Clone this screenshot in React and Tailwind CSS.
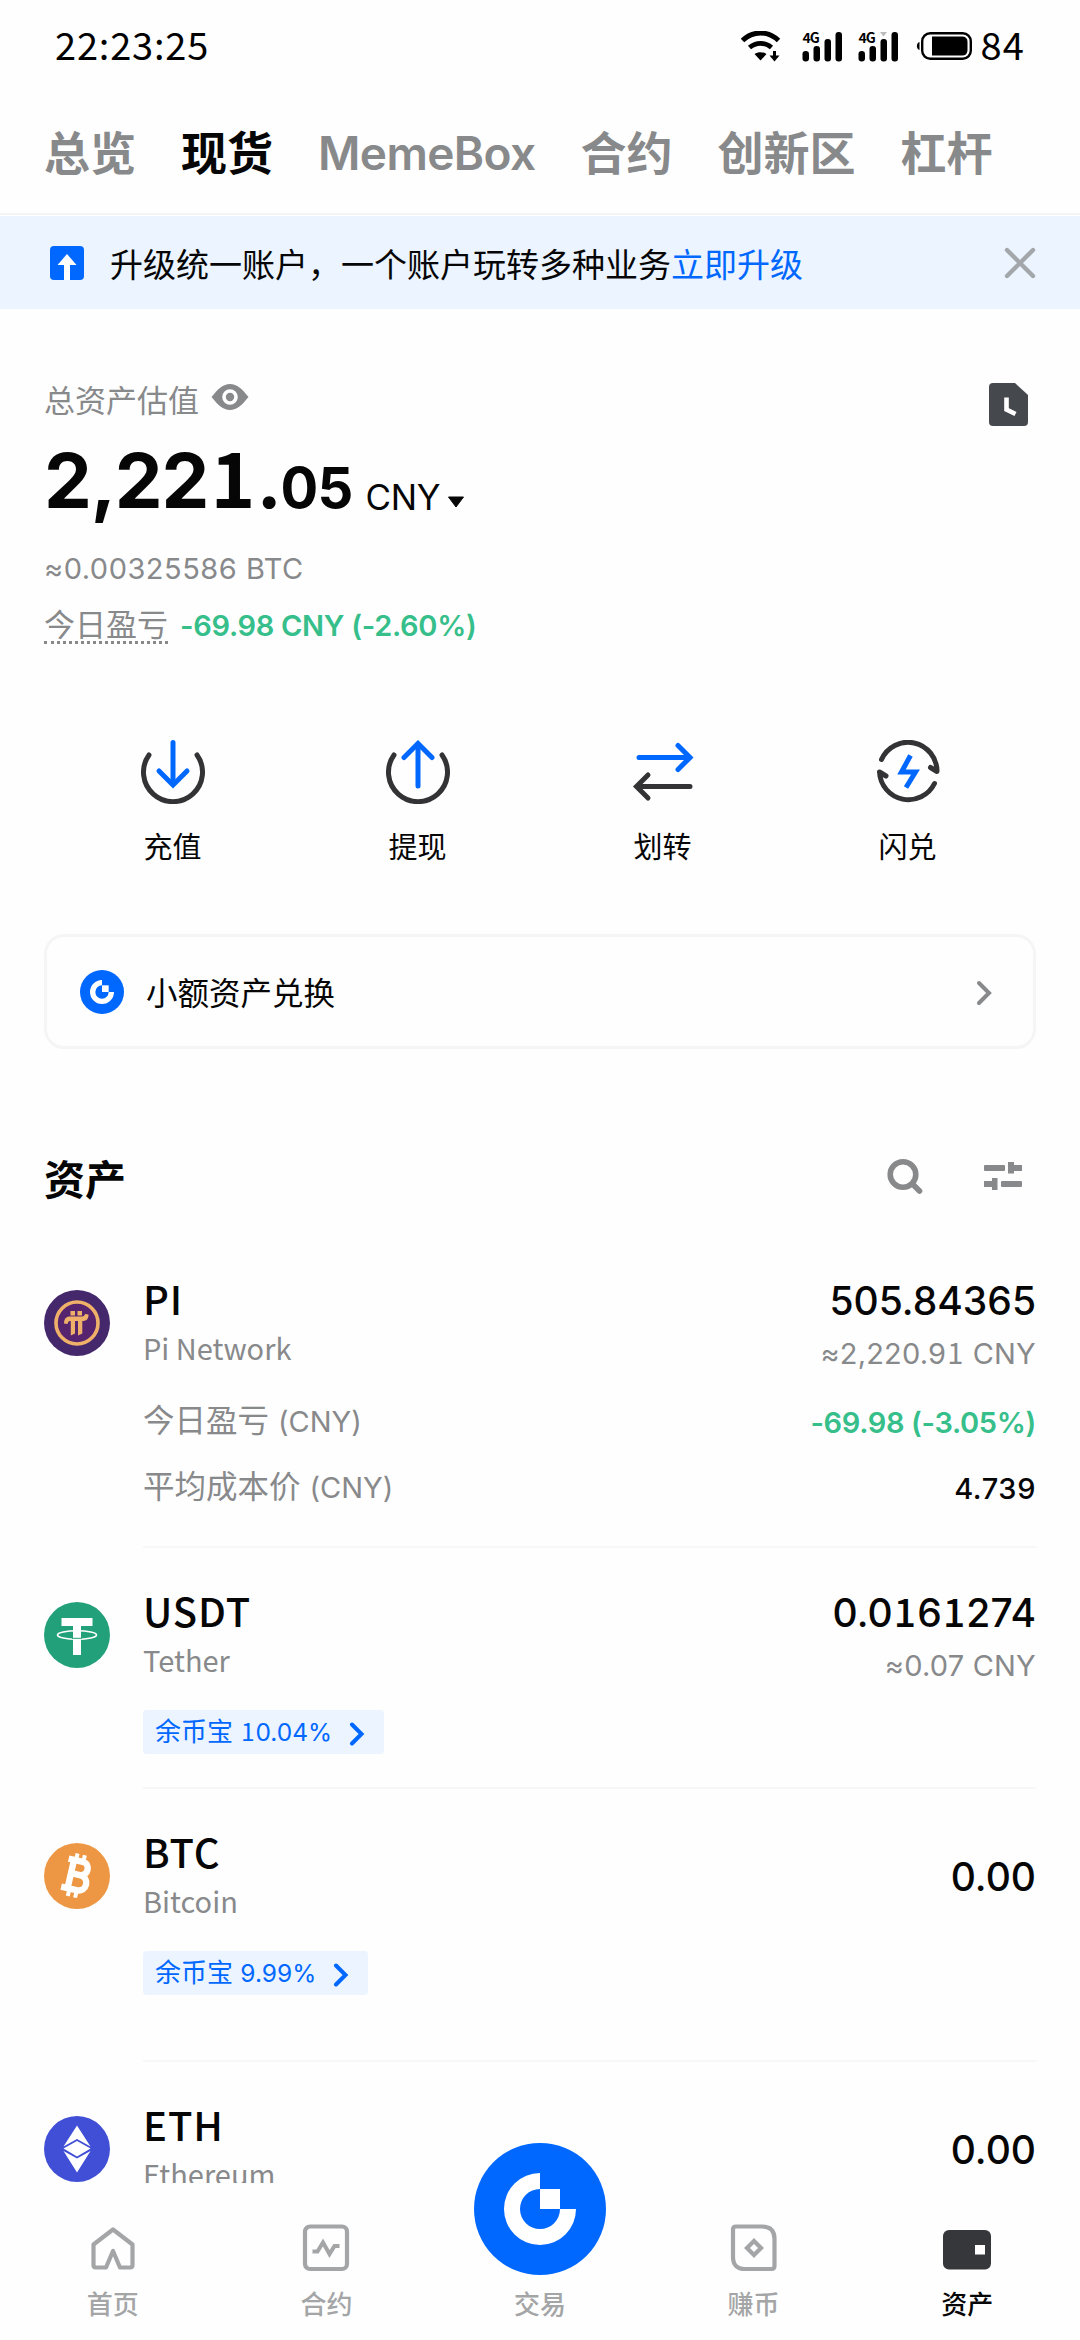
import React, { useState } from 'react';

const tabs = [
  { id: 'overview', name: '总览' },
  { id: 'spot', name: '现货' },
  { id: 'memebox', name: 'MemeBox' },
  { id: 'futures', name: '合约' },
  { id: 'innovation', name: '创新区' },
  { id: 'margin', name: '杠杆' }
];

const Num = ({ children }) =>
  String(children).split(/(1)/).map((part, i) =>
    part === '1' ? (
      <span key={i} className="font-['Noto_Sans_CJK_SC',sans-serif] leading-[0] mx-[0.03em]">1</span>
    ) : (
      part
    )
  );

const WifiIcon = () => (
  <svg className="w-[40px] h-[31px]" viewBox="0 0 40 31" fill="none">
    <path d="M1.500 9.500C12 -0.500 27 -0.500 37.500 9.500" stroke="#000" strokeWidth="5" />
    <path d="M8.500 16.500C15 11 24 11 30.500 16.500" stroke="#000" strokeWidth="4.800" />
    <path d="M13.500 23C17 20.500 22 20.500 25.500 23L19.500 29.500Z" fill="#000" />
    <path d="M33.500 20V26" stroke="#000" strokeWidth="3" />
    <path d="M28.500 24.500H38.500L33.500 30.500Z" fill="#000" />
  </svg>
);

const SignalIcon = ({ marker }) => (
  <div className="relative w-[41px] h-[31px]">
    <span className="absolute left-[1px] top-[-1px] text-[14px] leading-none font-bold tracking-[-1px]">4G</span>
    <svg className="w-[41px] h-[31px]" viewBox="0 0 41 31">
      <g fill="#000">
        <rect x="0.500" y="20" width="6.500" height="10.500" rx="3.200" />
        <rect x="11.500" y="15" width="6.500" height="15.500" rx="3" />
        <rect x="22.500" y="8" width="6.500" height="22.500" rx="3" />
        <rect x="33.500" y="1" width="6.500" height="29.500" rx="3" />
      </g>
      {marker && <path d="M22 1H29L25.500 5.500Z" fill="#bbb" />}
    </svg>
  </div>
);

const BatteryIcon = () => (
  <svg className="w-[56px] h-[28px]" viewBox="0 0 56 28">
    <path d="M3.500 10V18C0 17 0 11 3.500 10Z" fill="#000" />
    <rect x="6.200" y="1.200" width="48.600" height="25.600" rx="8" fill="none" stroke="#000" strokeWidth="2.400" />
    <path d="M16 4.500H46Q51.500 4.500 51.500 10V18Q51.500 23.500 46 23.500H16Z" fill="#000" />
  </svg>
);

const GateMark = ({ className }) => (
  <svg className={className} viewBox="0 0 132 132">
    <circle cx="66" cy="66" r="66" fill="#0068ff" />
    <path d="M66 30A36 36 0 1 0 102 66H86A20 20 0 1 1 66 46Z" fill="#fff" />
    <rect x="66" y="46" width="20" height="20" fill="#fff" />
  </svg>
);

const DepositIcon = () => (
  <svg className="w-[64px] h-[64px]" viewBox="0 0 64 64" fill="none" strokeLinecap="round">
    <path d="M8 15A29.500 29.500 0 1 0 56 15" stroke="#333336" strokeWidth="5" />
    <g stroke="#0068ff" strokeWidth="5">
      <path d="M32 2.500V44" />
      <path d="M18 31L32 45L46 31" />
    </g>
  </svg>
);

const WithdrawIcon = () => (
  <svg className="w-[64px] h-[64px]" viewBox="0 0 64 64" fill="none" strokeLinecap="round">
    <path d="M8 15A29.500 29.500 0 1 0 56 15" stroke="#333336" strokeWidth="5" />
    <g stroke="#0068ff" strokeWidth="5">
      <path d="M32 46V4" />
      <path d="M18 17.500L32 3.500L46 17.500" />
    </g>
  </svg>
);

const TransferIcon = () => (
  <svg className="w-[64px] h-[64px]" viewBox="0 0 64 64" fill="none" strokeWidth="5" strokeLinecap="round">
    <path d="M8 17.500H59M47 5.500L59 17.500L47 29.500" stroke="#0068ff" />
    <path d="M59 46.500H6M17 35L5.500 46.500L17 58" stroke="#333336" />
  </svg>
);

const FlashIcon = () => (
  <svg className="w-[64px] h-[64px]" viewBox="0 0 64 64" fill="none">
    <g stroke="#333336" strokeWidth="5" strokeLinecap="round" strokeLinejoin="round">
      <path d="M5.500 19.500A29 29 0 0 1 61 31.500L54.500 27.500" />
      <path d="M58.500 43.500A29 29 0 0 1 3.500 32L10 36" />
    </g>
    <path d="M34.500 15.500L25.500 32H39.500L30 47.500" stroke="#0068ff" strokeWidth="5" />
  </svg>
);

const actions = [
  { name: '充值', icon: DepositIcon },
  { name: '提现', icon: WithdrawIcon },
  { name: '划转', icon: TransferIcon },
  { name: '闪兑', icon: FlashIcon }
];

const PiLogo = () => (
  <svg className="w-[66px] h-[66px]" viewBox="0 0 66 66">
    <circle cx="33" cy="33" r="33" fill="#45286b" />
    <circle cx="33" cy="33" r="21" fill="#56246f" stroke="#efb169" strokeWidth="3.600" />
    <g fill="#efb169">
      <rect x="26.500" y="21" width="4.500" height="4.500" />
      <rect x="33.500" y="21" width="4.500" height="4.500" />
      <path d="M20 33.500C20 29 22 26.500 26 26.500H38C40 26.500 40.500 25.500 41 24L44.500 24.500C44.500 29 42.500 31 38.500 31H26C24.500 31 24 32 23.500 34Z" />
      <path d="M26.800 30H31V43.500L26.800 45.500Z" />
      <path d="M34 30H38.300V43.500L34 45.500Z" />
    </g>
  </svg>
);

const TetherLogo = () => (
  <svg className="w-[66px] h-[66px]" viewBox="0 0 66 66">
    <circle cx="33" cy="33" r="33" fill="#22a079" />
    <path d="M17.500 16H48.500V24H37V53H29V24H17.500Z" fill="#fff" />
    <ellipse cx="33" cy="33" rx="19.500" ry="4.200" fill="none" stroke="#fff" strokeWidth="1.600" />
    <path d="M28 36.300H38" stroke="#22a079" strokeWidth="1" />
  </svg>
);

const BitcoinLogo = () => (
  <svg className="w-[66px] h-[66px]" viewBox="0 0 66 66">
    <circle cx="33" cy="33" r="33" fill="#ed9744" />
    <g transform="rotate(13 33 33)" fill="none" stroke="#fff">
      <path d="M21 18H35.500C44 18 44 31.500 35.500 31.500H28M35.500 31.500C46.500 31.500 46.500 47 35.500 47H20M26.500 18V47" strokeWidth="6.400" />
      <path d="M28.500 11V18M36 11V18M28.500 47V54.500M36 47V54.500" strokeWidth="4" />
    </g>
  </svg>
);

const EthereumLogo = () => (
  <svg className="w-[66px] h-[66px]" viewBox="0 0 66 66">
    <circle cx="33" cy="33" r="33" fill="#404fd6" />
    <g fill="#fff">
      <path d="M33 9.500L46.500 30.500L33 23L19.500 30.500Z" />
      <path d="M33 25L46.500 32.500L33 40.500L19.500 32.500Z" />
      <path d="M19.500 35L33 42.500L46.500 35L33 56.500Z" />
    </g>
  </svg>
);

const assets = [
  {
    symbol: 'PI',
    name: 'Pi Network',
    logo: PiLogo,
    amount: '505.84365',
    value: '≈2,220.91 CNY',
    pnl: '-69.98 (-3.05%)',
    cost: '4.739',
    spacing: 'pb-[42px]'
  },
  { symbol: 'USDT', name: 'Tether', logo: TetherLogo, amount: '0.0161274', value: '≈0.07 CNY', earn: '10.04%', spacing: 'pb-[33px]' },
  { symbol: 'BTC', name: 'Bitcoin', logo: BitcoinLogo, amount: '0.00', earn: '9.99%', spacing: 'pb-[65px]' },
  { symbol: 'ETH', name: 'Ethereum', logo: EthereumLogo, amount: '0.00', spacing: 'pb-[60px]' }
];

const AssetRow = ({ asset }) => {
  const Logo = asset.logo;
  return (
    <div className="flex pt-[42px]">
      <div className="w-[99px] h-[90px] flex items-center shrink-0">
        <Logo />
      </div>
      <div className={`flex-1 ${asset.spacing} border-b-2 border-[#f7f7f8]`}>
        <div className="h-[90px] flex justify-between items-center">
          <div className="self-start flex flex-col gap-[15px] font-['Noto_Sans_CJK_SC',sans-serif]">
            <span className="text-[40px] leading-none font-medium tracking-[0.9px]">{asset.symbol}</span>
            <span className="text-[29px] leading-none text-[#88898b]">{asset.name}</span>
          </div>
          <div className={`flex flex-col items-end gap-[19px] ${asset.value ? 'pt-[3px]' : ''}`}>
            <span className="text-[39px] leading-none font-medium"><Num>{asset.amount}</Num></span>
            {asset.value && (
              <span className="text-[29px] leading-none text-[#88898b] tracking-[0.2px]"><Num>{asset.value}</Num></span>
            )}
          </div>
        </div>
        {asset.pnl && (
          <div className="mt-[38px] flex flex-col gap-[34px] leading-none">
            <div className="h-[32px] flex justify-between items-center">
              <span className="text-[31.500px] pb-[3px] text-[#88898b]">今日盈亏 <span className="text-[29px]">(CNY)</span></span>
              <span className="text-[29px] font-semibold tracking-[-0.35px] text-[#36be8b]">{asset.pnl}</span>
            </div>
            <div className="h-[32px] flex justify-between items-center">
              <span className="text-[31.500px] pb-[3px] text-[#88898b]">平均成本价 <span className="text-[29px]">(CNY)</span></span>
              <span className="text-[29px] font-medium tracking-[0.6px]">{asset.cost}</span>
            </div>
          </div>
        )}
        {asset.earn && (
          <button className="mt-[30px] h-[44px] px-[12px] flex items-center rounded-[4px] bg-[#ebf4ff] text-[#0068ff] leading-none">
            <span className="text-[26px]">余币宝 <span className="text-[24.500px]"><Num>{asset.earn}</Num></span></span>
            <svg className="ml-[17px] mr-[7px] mt-[3px] w-[16px] h-[24px]" viewBox="0 0 16 24" fill="none">
              <path d="M3 2.500L12.500 12L3 21.500" stroke="#0068ff" strokeWidth="4" strokeLinecap="round" />
            </svg>
          </button>
        )}
      </div>
    </div>
  );
};

const HomeIcon = () => (
  <svg className="w-[48px] h-[48px]" viewBox="0 0 48 48" fill="none" stroke="#a4a5a6" strokeWidth="4.200" strokeLinejoin="round">
    <path d="M24 5.500L43.500 20.500V41Q43.500 43.500 41 43.500H31L24 27L17 43.500H7Q4.500 43.500 4.500 41V20.500Z" />
  </svg>
);

const ContractIcon = () => (
  <svg className="w-[48px] h-[48px]" viewBox="0 0 48 48" fill="none" stroke="#a4a5a6" strokeWidth="4.200">
    <rect x="3" y="2.500" width="42" height="42.500" rx="5" />
    <path d="M10.500 27.500H15.500L21 18.500L27.500 30L32.500 22H37.500" strokeWidth="4" />
  </svg>
);

const EarnIcon = () => (
  <svg className="w-[48px] h-[48px]" viewBox="0 0 48 48" fill="none" stroke="#a4a5a6" strokeWidth="4.200">
    <path d="M6 2.500H32Q44.500 2.500 44.500 15V42Q44.500 45 41.500 45H15Q3 45 3 33V5.500Q3 2.500 6 2.500Z" />
    <path d="M24 17L31 24L24 31L17 24Z" />
  </svg>
);

const WalletIcon = () => (
  <svg className="w-[48px] h-[48px]" viewBox="0 0 48 48">
    <rect x="0" y="6" width="48" height="39.500" rx="6" fill="#35373b" />
    <rect x="32" y="21" width="10" height="9.500" fill="#fff" />
  </svg>
);

const navItems = [
  { id: 'home', name: '首页', icon: HomeIcon },
  { id: 'contract', name: '合约', icon: ContractIcon },
  { id: 'trade', name: '交易' },
  { id: 'earn', name: '赚币', icon: EarnIcon },
  { id: 'assets', name: '资产', icon: WalletIcon }
];

const App = () => {
  const [activeTab, setActiveTab] = useState('spot');
  const [activeNav, setActiveNav] = useState('assets');
  const [showBanner, setShowBanner] = useState(true);

  return (
    <div className="w-[1080px] h-[2340px] bg-[#fefefe] text-[#060607] overflow-hidden flex flex-col font-['Inter','Noto_Sans_CJK_SC',sans-serif]">
      <div className="h-[2183px] overflow-hidden shrink-0">
        {/* Status bar */}
        <div className="h-[92px] pl-[55px] pr-[55px] flex items-center justify-between font-['Noto_Sans_CJK_SC',sans-serif] text-black">
          <span className="text-[38px] leading-none mt-[-4px] tracking-[0.8px]">22:23:25</span>
          <div className="flex items-center">
            <WifiIcon />
            <div className="ml-[21px]"><SignalIcon /></div>
            <div className="ml-[15px]"><SignalIcon marker /></div>
            <div className="ml-[17px]"><BatteryIcon /></div>
            <span className="ml-[9px] text-[38px] leading-none mt-[-4px] tracking-[1.1px]">84</span>
          </div>
        </div>

        {/* Account tabs */}
        <div className="h-[123px] mb-[1px] px-[44px] flex items-center gap-[45px] border-b-2 border-[#f3f4f6]">
          {tabs.map((tab) => (
            <button
              key={tab.id}
              onClick={() => setActiveTab(tab.id)}
              className={`text-[46px] leading-none whitespace-nowrap ${
                activeTab === tab.id ? 'font-bold text-[#060607]' : 'font-semibold text-[#88898b]'
              }`}
            >
              {tab.id === 'memebox' ? <span className="tracking-[-0.6px]">{tab.name}</span> : tab.name}
            </button>
          ))}
        </div>

        {/* Upgrade banner */}
        {showBanner && (
          <div className="h-[93px] bg-[#ebf4ff] pl-[50px] pr-[44px] flex items-center">
            <svg className="w-[34px] h-[34px]" viewBox="0 0 34 34">
              <rect width="34" height="34" rx="4" fill="#0068ff" />
              <path d="M17 8L26.500 19H20V34H14V19H7.500Z" fill="#fff" />
            </svg>
            <p className="ml-[26px] pt-[5px] text-[33px] leading-none">
              升级统一账户，一个账户玩转多种业务<span className="text-[#0068ff]">立即升级</span>
            </p>
            <button className="ml-auto" onClick={() => setShowBanner(false)}>
              <svg className="w-[32px] h-[32px] block" viewBox="0 0 32 32">
                <path d="M3 3L29 29M29 3L3 29" stroke="#a3a7ac" strokeWidth="4.400" strokeLinecap="round" />
              </svg>
            </button>
          </div>
        )}

        {/* Balance */}
        <div className="pt-[71px] px-[44px] flex justify-between">
          <div className="flex flex-col items-start leading-none">
            <div className="h-[40px] flex items-center text-[31px] text-[#88898b]">
              总资产估值
              <svg className="ml-[11px] mb-[6px] w-[40px] h-[28px]" viewBox="0 0 40 28">
                <path d="M1.500 14C8 6 13 1 20 1S32 6 38.500 14C32 22 27 27 20 27S8 22 1.500 14Z" fill="#88898b" />
                <circle cx="20" cy="14" r="6" fill="#88898b" stroke="#fff" strokeWidth="3.600" />
              </svg>
            </div>
            <div className="mt-[22px] h-[76px] flex items-baseline">
              <span className="text-[76px] leading-none font-bold tracking-[-1.2px]"><Num>2,221.</Num></span>
              <span className="text-[56px] leading-none font-bold tracking-[-0.8px]">05</span>
              <span className="ml-[13px] pt-1 text-[35px] leading-none translate-y-[2px] tracking-[-0.4px]">CNY</span>
              <svg className="ml-[7px] mb-[5px] w-[18px] h-[12px]" viewBox="0 0 18 12">
                <path d="M1.500 1H16.500L9 11Z" fill="#060607" stroke="#060607" strokeLinejoin="round" />
              </svg>
            </div>
            <div className="mt-[36px] h-[30px] text-[29px] leading-[30px] tracking-[0.5px] text-[#88898b]">≈0.00325586 BTC</div>
            <div className="mt-[26px] h-[34px] flex items-start">
              <span className="h-[34px] text-[31px] leading-[30px] text-[#88898b] border-b-[3px] border-dotted border-[#88898b]">今日盈亏</span>
              <span className="ml-[12px] text-[29px] leading-[32px] font-semibold tracking-[-0.3px] text-[#36be8b]">-69.98 CNY (-2.60%)</span>
            </div>
          </div>
          <svg className="mt-[3px] mr-[8px] w-[39px] h-[43px]" viewBox="0 0 39 43">
            <path d="M4 0H26L39 12V39Q39 43 35 43H4Q0 43 0 39V4Q0 0 4 0Z" fill="#45484d" />
            <path d="M17.500 14.500V26.500L26.500 31" stroke="#fff" strokeWidth="4.600" fill="none" />
          </svg>
        </div>

        {/* Quick actions */}
        <div className="mt-[96px] px-[50px] grid grid-cols-4">
          {actions.map((action) => {
            const Icon = action.icon;
            return (
              <button key={action.name} className="flex flex-col items-center gap-[29px]">
                <Icon />
                <span className="text-[29px] leading-[30px]">{action.name}</span>
              </button>
            );
          })}
        </div>

        {/* Small balance convert */}
        <div className="mt-[71px] mx-[44px] h-[115px] pl-[33px] pr-[40px] flex items-center rounded-[20px] border-[3px] border-[#f5f5f6]">
          <GateMark className="w-[44px] h-[44px]" />
          <span className="ml-[22px] text-[31.500px] leading-none pt-[4px]">小额资产兑换</span>
          <svg className="ml-auto mt-[2px] w-[18px] h-[26px]" viewBox="0 0 18 26" fill="none">
            <path d="M4 3L14 13L4 23" stroke="#88898b" strokeWidth="4" strokeLinecap="round" />
          </svg>
        </div>

        {/* Asset list */}
        <div className="mt-[101px] h-[60px] pl-[44px] pr-[58px] flex items-center">
          <h2 className="text-[41px] leading-none font-bold">资产</h2>
          <svg className="ml-auto mb-[8px] w-[36px] h-[36px]" viewBox="0 0 36 36" fill="none" stroke="#88898b">
            <circle cx="16" cy="16.500" r="12.800" strokeWidth="5.600" />
            <path d="M26 26.500L32.500 33" strokeWidth="5.600" strokeLinecap="round" />
          </svg>
          <svg className="ml-[61px] mb-[8px] w-[38px] h-[28px]" viewBox="0 0 38 28" fill="#88898b">
            <rect x="0" y="3" width="21" height="6" rx="1" />
            <path d="M24 0H30V3H38V9H30V11.500H24Z" />
            <path d="M0 19H8V16H13.500V28H8V25H0Z" />
            <rect x="17" y="19" width="21" height="6" rx="1" />
          </svg>
        </div>
        <div className="mt-[26px] pl-[44px] pr-[44px]">
          {assets.map((asset) => (
            <AssetRow key={asset.symbol} asset={asset} />
          ))}
        </div>
      </div>

      {/* Bottom navigation */}
      <nav className="relative h-[157px] px-[6px] grid grid-cols-5 shrink-0 bg-[#fefefe]">
        {navItems.map((item) => {
          const Icon = item.icon;
          return (
            <button
              key={item.id}
              onClick={() => setActiveNav(item.id)}
              className={`flex flex-col items-center text-[26px] leading-none font-medium ${
                activeNav === item.id ? 'text-[#060607]' : 'text-[#a4a5a6]'
              }`}
            >
              {Icon ? (
                <div className="mt-[41px] h-[48px]"><Icon /></div>
              ) : (
                <GateMark className="-mt-[40px] mb-[-3px] w-[132px] h-[132px]" />
              )}
              <span className="mt-[20px]">{item.name}</span>
            </button>
          );
        })}
      </nav>
    </div>
  );
};

export default App;
